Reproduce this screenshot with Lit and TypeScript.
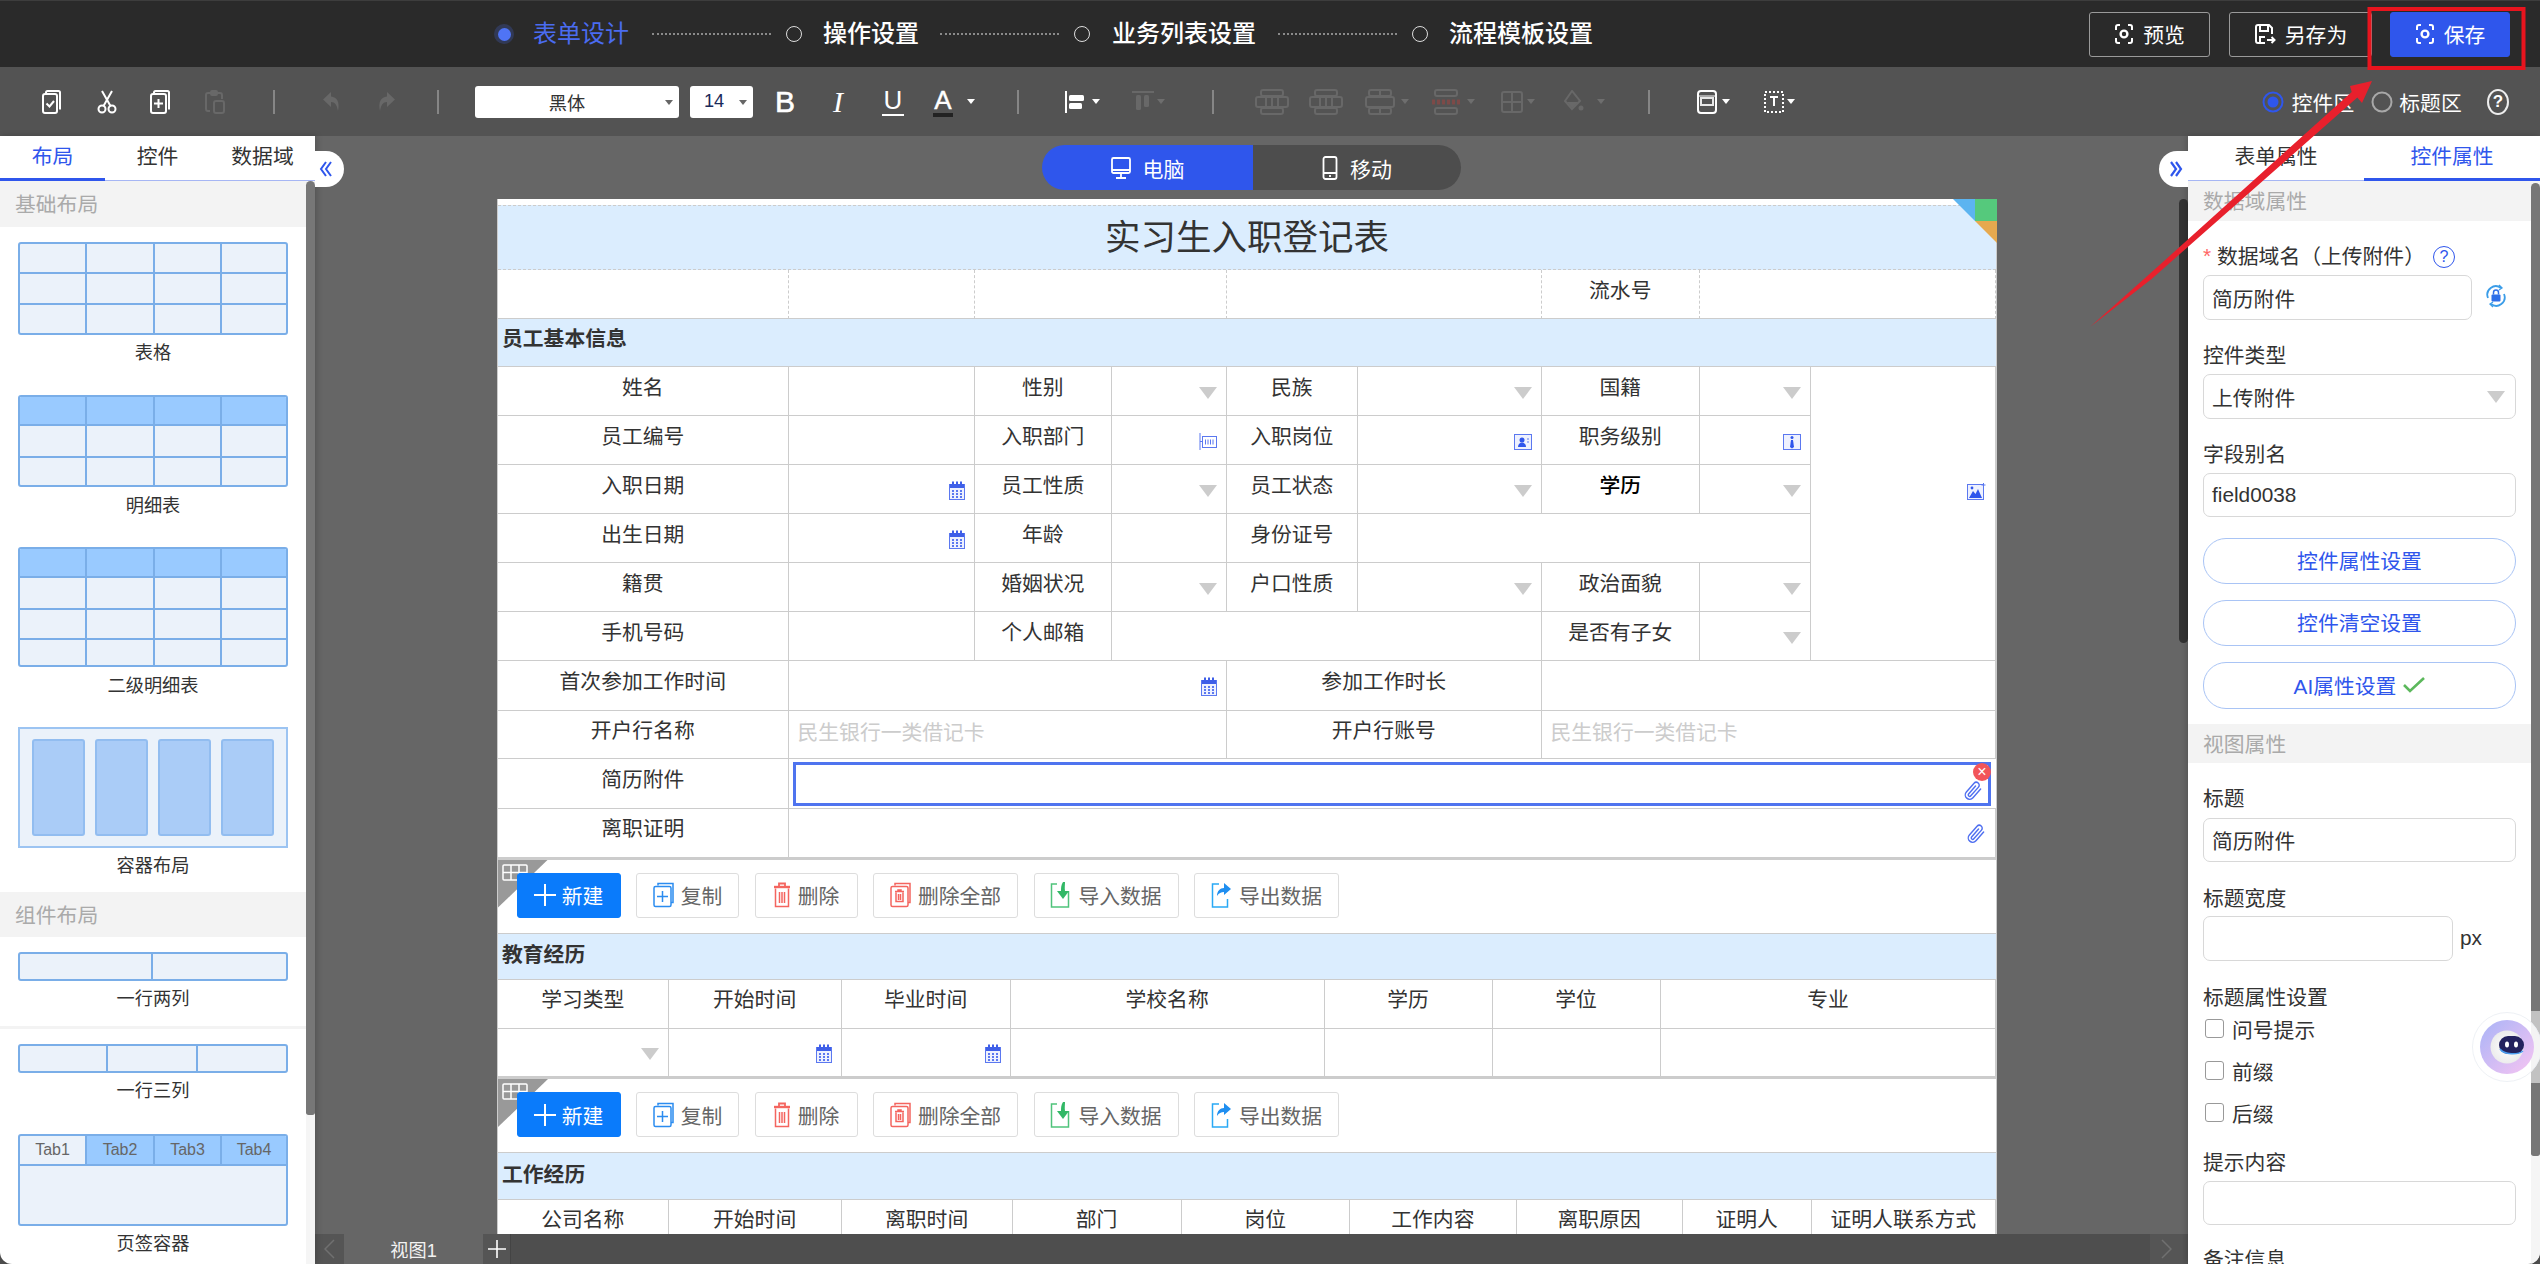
import { LitElement, html, css } from "lit";
import { customElement } from "lit/decorators.js";

const icoScan = html`<svg width="20" height="22" viewBox="0 0 20 22" fill="none" stroke="currentColor" stroke-width="2"><path d="M6 2H4a2 2 0 0 0-2 2v3M14 2h2a2 2 0 0 1 2 2v3M6 20H4a2 2 0 0 1-2-2v-3M14 20h2a2 2 0 0 0 2-2v-3"/><circle cx="10" cy="11" r="3.4" stroke-width="2.4"/></svg>`;
const icoSaveAs = html`<svg width="22" height="22" viewBox="0 0 22 22" fill="none" stroke="currentColor" stroke-width="2"><path d="M11 20H4a2 2 0 0 1-2-2V4a2 2 0 0 1 2-2h11l3 3v6"/><path d="M6 2v6h8V2M6 20v-6h5"/><path d="M13 17h7M17.500 14l3 3-3 3"/></svg>`;
const icoCopyCheck = html`<svg width="26" height="26" viewBox="0 0 26 26" fill="none" stroke="currentColor" stroke-width="2"><path d="M7 5V3.500A1.500 1.500 0 0 1 8.500 2h11A1.500 1.500 0 0 1 21 3.500v17"/><rect x="4" y="5" width="14" height="19" rx="2"/><path d="M7.500 14.500l3 3 4.500-5.500"/></svg>`;
const icoScissors = html`<svg width="24" height="26" viewBox="0 0 24 26" fill="none" stroke="currentColor" stroke-width="2"><circle cx="7" cy="20" r="3.500"/><circle cx="17" cy="20" r="3.500"/><path d="M8.500 17 17 2M15.500 17 7 2"/></svg>`;
const icoCopyPlus = html`<svg width="26" height="26" viewBox="0 0 26 26" fill="none" stroke="currentColor" stroke-width="2"><path d="M7 5V3.500A1.500 1.500 0 0 1 8.500 2h12A1.500 1.500 0 0 1 22 3.500v17"/><rect x="4" y="5" width="15" height="19" rx="2"/><path d="M11.500 10v9M7 14.500h9"/></svg>`;
const icoPaste = html`<svg width="24" height="26" viewBox="0 0 24 26" fill="none" stroke="currentColor" stroke-width="2"><path d="M7 22H5a2 2 0 0 1-2-2V6a2 2 0 0 1 2-2h12a2 2 0 0 1 2 2v4"/><rect x="8" y="2" width="6" height="4" rx="1"/><rect x="11" y="12" width="10" height="12" rx="2"/></svg>`;
const icoUndo = html`<svg width="24" height="26" viewBox="0 0 24 26" fill="currentColor"><path d="M11 3 3 10.500 11 18v-5c4 0 6 3 7 9 2-9-1-14-7-14.500z"/></svg>`;
const icoRedo = html`<svg width="24" height="26" viewBox="0 0 24 26" fill="currentColor"><path d="M13 3l8 7.500L13 18v-5c-4 0-6 3-7 9-2-9 1-14 7-14.500z"/></svg>`;
const icoAlignL = html`<svg width="22" height="24" viewBox="0 0 22 24" fill="currentColor"><rect x="1" y="1" width="2" height="22"/><rect x="5" y="5" width="15" height="6" rx="1.500"/><rect x="5" y="13" width="13" height="6" rx="1.500"/></svg>`;
const icoAlignT = html`<svg width="26" height="24" viewBox="0 0 26 24" fill="currentColor"><rect x="2" y="1" width="22" height="2"/><rect x="6" y="5" width="5" height="15" rx="1.500"/><rect x="14" y="5" width="5" height="12" rx="1.500"/></svg>`;
const icoMerge = html`<svg width="34" height="26" viewBox="0 0 34 26" fill="none" stroke="currentColor" stroke-width="2"><rect x="6" y="1" width="22" height="6" rx="2"/><rect x="1" y="8" width="32" height="10" rx="2"/><rect x="6" y="19" width="22" height="6" rx="2"/><path d="M11 8v10M17 8v10M23 8v10"/></svg>`;
const icoMerge2 = html`<svg width="30" height="26" viewBox="0 0 30 26" fill="none" stroke="currentColor" stroke-width="2"><rect x="4" y="1" width="22" height="6" rx="2"/><rect x="1" y="8" width="28" height="10" rx="2"/><rect x="4" y="19" width="22" height="6" rx="2"/><path d="M15 1v6M15 19v6"/></svg>`;
const icoMergeR = html`<svg width="30" height="26" viewBox="0 0 30 26" fill="none" stroke="currentColor" stroke-width="2"><rect x="4" y="1" width="22" height="6" rx="2"/><rect x="4" y="19" width="22" height="6" rx="2"/><path d="M1 13h28" stroke="#7d4a48" stroke-width="5" stroke-dasharray="3 2"/></svg>`;
const icoGrid = html`<svg width="22" height="24" viewBox="0 0 22 24" fill="none" stroke="currentColor" stroke-width="2"><rect x="1" y="2" width="20" height="20" rx="2"/><path d="M11 2v20M1 12h20"/></svg>`;
const icoFill = html`<svg width="20" height="24" viewBox="0 0 20 24" fill="currentColor"><path d="M8 1 1 11l7 8 8-8z" fill="none" stroke="currentColor" stroke-width="2"/><path d="M3 12h11l-6 6z"/><circle cx="17" cy="18" r="2.500"/></svg>`;
const icoRowBox = html`<svg width="20" height="24" viewBox="0 0 20 24" fill="none"><rect x="1" y="1" width="18" height="22" rx="3" stroke="#fff" stroke-width="2"/><rect x="4" y="8" width="12" height="7" stroke="#e8e8e8" stroke-width="2"/><path d="M1 6h18" stroke="#fff" stroke-width="1"/></svg>`;
const icoTitleBox = html`<svg width="20" height="24" viewBox="0 0 20 24" fill="none"><rect x="1" y="2" width="18" height="20" stroke="#fff" stroke-width="2" stroke-dasharray="2 2"/><path d="M6 7h8M10 7v9" stroke="#fff" stroke-width="2"/></svg>`;
const radioOn = html`<svg width="22" height="22" viewBox="0 0 22 22"><circle cx="11" cy="11" r="9.500" fill="none" stroke="#2f56ec" stroke-width="2"/><circle cx="11" cy="11" r="5.500" fill="#2f56ec"/></svg>`;
const radioOff = html`<svg width="22" height="22" viewBox="0 0 22 22"><circle cx="11" cy="11" r="9.500" fill="none" stroke="#a8a8a8" stroke-width="2"/></svg>`;
const chevL = html`<svg width="14" height="16" viewBox="0 0 14 16" fill="none" stroke="#2f56ec" stroke-width="2"><path d="M7 1 2 8l5 7M12 1 7 8l5 7"/></svg>`;
const chevR = html`<svg width="14" height="16" viewBox="0 0 14 16" fill="none" stroke="#2f56ec" stroke-width="2.200"><path d="M2 1l5 7-5 7M7 1l5 7-5 7"/></svg>`;
const icoMonitor = html`<svg width="20" height="24" viewBox="0 0 20 24" fill="none" stroke="#fff" stroke-width="1.800"><rect x="1" y="2" width="18" height="15" rx="1.500"/><path d="M1 14h18M10 17v4M5 22h10"/></svg>`;
const icoMobile = html`<svg width="16" height="24" viewBox="0 0 16 24" fill="none" stroke="#fff" stroke-width="1.800"><rect x="1.500" y="1" width="13" height="22" rx="2"/><path d="M1.500 17h13M8 19v2"/></svg>`;
const icoCal = html`<svg width="16" height="19" viewBox="0 0 16 19"><rect x="0.500" y="3.500" width="15" height="15" fill="#eef1fe" stroke="#5b78f0"/><rect x="1" y="3" width="14" height="4" fill="#3f5fe8"/><rect x="3" y="0.500" width="2" height="4" fill="#3f5fe8"/><rect x="7" y="0.500" width="2" height="4" fill="#3f5fe8"/><rect x="11" y="0.500" width="2" height="4" fill="#3f5fe8"/><g fill="#5b78f0"><rect x="3" y="9" width="2" height="2"/><rect x="7" y="9" width="2" height="2"/><rect x="11" y="9" width="2" height="2"/><rect x="3" y="12" width="2" height="2"/><rect x="7" y="12" width="2" height="2"/><rect x="11" y="12" width="2" height="2"/><rect x="3" y="15" width="2" height="2"/><rect x="7" y="15" width="2" height="2"/><rect x="11" y="15" width="2" height="2"/></g></svg>`;
const icoSel = html`<span class="sel"></span>`;
const icoDept = html`<svg width="18" height="17" viewBox="0 0 18 17" fill="none" stroke="#5b78f0"><path d="M1 0v17M1 8.500h2"/><rect x="3.500" y="3.500" width="14" height="11" /><path d="M6.500 6.500v5M9 6.500v5M11.500 6.500v5M14 6.500v5" stroke-width="1"/></svg>`;
const icoPost = html`<svg width="18" height="16" viewBox="0 0 18 16"><rect x="0.500" y="0.500" width="17" height="15" fill="#eef1fe" stroke="#5b78f0"/><circle cx="8" cy="6" r="2.500" fill="#2f56ec"/><path d="M4 13c0-3 2-4.500 4-4.500s4 1.500 4 4.500z" fill="#2f56ec"/><path d="M13 5h2M13 8h2" stroke="#5b78f0"/></svg>`;
const icoRank = html`<svg width="18" height="16" viewBox="0 0 18 16"><rect x="0.500" y="0.500" width="17" height="15" fill="#eef1fe" stroke="#5b78f0"/><circle cx="9" cy="3.500" r="1.500" fill="#2f56ec"/><path d="M8 6h2l1 7-2 1.500L7 13z" fill="#2f56ec"/></svg>`;
const icoImg = html`<svg width="19" height="17" viewBox="0 0 19 17"><rect x="0.500" y="1.500" width="16" height="15" fill="#eef1fe" stroke="#5b78f0"/><path d="M2 15l4-7 2.500 3L11 6l4 9z" fill="#2f56ec"/><circle cx="5" cy="5" r="1.400" fill="#2f56ec"/><path d="M16.500 0v4M14.500 2h4" stroke="#5b78f0"/></svg>`;
const icoClip = html`<svg width="19" height="24" viewBox="0 0 24 24" fill="none" stroke="#4f6ff0" stroke-width="1.800" stroke-linecap="round"><path d="m21 9.500-9.700 11a5.500 5.500 0 0 1-8.300-7.300l9.700-11a3.700 3.700 0 0 1 5.600 4.900l-9.700 11a1.800 1.800 0 0 1-2.800-2.400l8.800-10"/></svg>`;
const icoPlus = html`<svg width="22" height="22" viewBox="0 0 22 22" stroke="#fff" stroke-width="2"><path d="M11 0v22M0 11h22"/></svg>`;
const icoCopy = html`<svg width="21" height="26" viewBox="0 0 21 26" fill="none" stroke="#2b8cf0" stroke-width="1.500"><path d="M5 3.500V1.500h15v19h-2"/><rect x="1" y="4.500" width="17" height="20" rx="1.500" fill="#fff"/><path d="M9.500 9v11M4 14.500h11"/></svg>`;
const icoTrash = html`<svg width="18" height="26" viewBox="0 0 18 26" fill="none" stroke="#f4655f" stroke-width="1.800"><path d="M1 5h16" stroke-width="2.400"/><path d="M6 5V1.500h6V5"/><path d="M2.500 6.500v18h13v-18M6.500 10v11M9 10v11M11.500 10v11" stroke-width="1.500"/></svg>`;
const icoTrashAll = html`<svg width="21" height="26" viewBox="0 0 21 26" fill="none" stroke="#f4655f" stroke-width="1.500"><path d="M5 3.500V1.500h15v19h-2"/><rect x="1" y="4.500" width="17" height="20" rx="1.500" fill="#fff"/><path d="M5 9.500h9M8 9.500V8h3v1.500M6 10.500v9h7v-9M8.500 12v6M10.500 12v6"/></svg>`;
const icoImport = html`<svg width="21" height="28" viewBox="0 0 21 28" fill="none"><path d="M7 3H1.500v23h17V10" stroke="#4fc37b" stroke-width="1.500"/><path d="M13 1c-2 3-2 6-2 9H7l6 8 6-8h-4c-.5-3 0-6 0-9z" fill="#32b866"/></svg>`;
const icoExport = html`<svg width="21" height="28" viewBox="0 0 21 28" fill="none"><path d="M8 3H1.500v23h15v-8" stroke="#29a9f5" stroke-width="1.500"/><path d="M13 2l7 6-7 6v-3c-3 0-5 1-7 4 0-5 3-8 7-8z" fill="#1f8ef0"/></svg>`;
const icoLock = html`<svg width="22" height="24" viewBox="0 0 22 24" fill="none"><path d="M3 14A8.500 8.500 0 0 1 16 4M19 10a8.500 8.500 0 0 1-13 10" stroke="#3b9de8" stroke-width="1.800"/><path d="M14 1l3 3-3 2M8 23l-3-3 3-2" stroke="#3b9de8" stroke-width="1.300"/><rect x="6.500" y="10.500" width="9" height="7" rx="1" fill="#2f6fe8"/><path d="M8.500 10.500V8.500a2.500 2.500 0 0 1 5 0v2" stroke="#2f6fe8" stroke-width="1.500"/></svg>`;
const icoCheck = html`<svg width="22" height="16" viewBox="0 0 22 16" fill="none" stroke="#5cb85c" stroke-width="2.600"><path d="M1 8l6 6L21 1"/></svg>`;
const icoTableMini = html`<svg width="26" height="17" viewBox="0 0 26 17" fill="none" stroke="#fff" stroke-width="1.500"><rect x="1" y="1" width="24" height="15" rx="1"/><path d="M9 1v15M17 1v15M1 8.500h24"/></svg>`;
const icoChevBL = html`<svg width="11" height="20" viewBox="0 0 11 20" fill="none" stroke="#707070" stroke-width="1.500"><path d="M10 1 1 10l9 9"/></svg>`;
const icoChevBR = html`<svg width="11" height="20" viewBox="0 0 11 20" fill="none" stroke="#707070" stroke-width="1.500"><path d="M1 1l9 9-9 9"/></svg>`;

type Cell = { k: "l" | "v" | "ph" | "title" | "dash" | "dashl" | "sec" | "selbox" | "strong"; t?: string; i?: any; s?: number; r?: number; top?: boolean };

const COLS = [290.5, 186.5, 136.5, 115.5, 130.5, 184, 158.5, 110.5, 185.5];
const ROWS = [65, 49, 48, 49, 49, 49, 49, 49, 49, 49.5, 48.5, 49.5, 49];
const L = (t: string, s = 1): Cell => ({ k: "l", t, s });
const V = (i?: any, s = 1): Cell => ({ k: "v", i, s });
const CELLS: Cell[] = [
  { k: "title", t: "实习生入职登记表", s: 9 },
  { k: "dash" }, { k: "dash" }, { k: "dash", s: 2 }, { k: "dash", s: 2 }, { k: "dashl", t: "流水号" }, { k: "dash", s: 2 },
  { k: "sec", t: "员工基本信息", s: 9 },
  L("姓名"), V(), L("性别"), V(icoSel), L("民族"), V(icoSel), L("国籍"), V(icoSel), { k: "v", i: icoImg, r: 6, top: true },
  L("员工编号"), V(), L("入职部门"), V(icoDept), L("入职岗位"), V(icoPost), L("职务级别"), V(icoRank),
  L("入职日期"), V(icoCal), L("员工性质"), V(icoSel), L("员工状态"), V(icoSel), { k: "strong", t: "学历" }, V(icoSel),
  L("出生日期"), V(icoCal), L("年龄"), V(), L("身份证号"), V(undefined, 3),
  L("籍贯"), V(), L("婚姻状况"), V(icoSel), L("户口性质"), V(icoSel), L("政治面貌"), V(icoSel),
  L("手机号码"), V(), L("个人邮箱"), V(undefined, 3), L("是否有子女"), V(icoSel),
  L("首次参加工作时间"), V(icoCal, 3), L("参加工作时长", 2), V(undefined, 3),
  L("开户行名称"), { k: "ph", t: "民生银行一类借记卡", s: 3 }, L("开户行账号", 2), { k: "ph", t: "民生银行一类借记卡", s: 3 },
  L("简历附件"), { k: "selbox", s: 8 },
  L("离职证明"), V(icoClip, 8),
];

const EDU_COLS = [170.6, 173, 169, 314, 168, 168, 335.7];
const WORK_COLS = [170.6, 173, 171, 169, 168.5, 166.5, 166, 129, 184.4];

@customElement("app-root")
export class AppRoot extends LitElement {
  static styles = css`
    :host { display: block; width: 2540px; height: 1264px; overflow: hidden; position: relative;
      font-family: "Liberation Sans", "Noto Sans CJK SC", sans-serif; color: #333; background: #4e4e4e; }
    * { box-sizing: border-box; }
    .top { height: 67px; background: #2a2a2a; border-top: 1px solid #3d3d3d; display: flex; align-items: center; padding: 0 30px 0 494px; }
    .stepdot { width: 20px; height: 20px; border-radius: 50%; background: rgba(79,116,245,.22); display: flex; align-items: center; justify-content: center; }
    .stepdot i { display: block; width: 13px; height: 13px; border-radius: 50%; background: #4f74f5; }
    .steptxt { font-size: 24px; color: #fff; font-weight: 500; line-height: 32px; white-space: nowrap; margin-left: 21px; }
    .steptxt.on { color: #4a6cf0; font-weight: 400; margin-left: 19px; }
    .dots { width: 119px; border-top: 2px dotted #8a8a8a; margin-left: 21px; margin-right: 15px; }
    .ring { width: 16px; height: 16px; border-radius: 50%; border: 1.500px solid #ddd; }
    .topbtns { margin-left: auto; display: flex; gap: 19px; }
    .topbtn { height: 45px; border: 1px solid #9a9a9a; border-radius: 3px; color: #fff; font-size: 20.800px; display: flex; align-items: center; justify-content: center; gap: 9px; }
    .topbtn.a { width: 121px; } .topbtn.b { width: 143px; margin-right: -1px; }
    .topbtn.save { width: 120px; background: #2f56ec; border-color: #2f56ec; }
    .tools { height: 69px; background: #535353; display: flex; align-items: center; color: #fff; }
    .tb { flex: none; display: flex; align-items: center; justify-content: center; }
    .tb.dis { color: #686868; }
    .sep { width: 2px; height: 24px; background: #868686; }
    .ca { width: 0; height: 0; border-left: 4px solid transparent; border-right: 4px solid transparent; border-top: 5px solid #fff; }
    .dis .ca { border-top-color: #6e6e6e; }
    .fsel { height: 32px; background: #fff; border-radius: 3px; color: #333; font-size: 18.200px; display: flex; align-items: center; position: relative; justify-content: center; }
    .fsel .ca { position: absolute; right: 6px; top: 14px; border-top-color: #666; }
    .fsel.f14 { justify-content: flex-start; padding-left: 14px; color: #1a2a5a; }
    .fmt { font-size: 30px; line-height: 30px; }
    .fmt.b { -webkit-text-stroke: 0.600px #fff; }
    .fmt.i { font-family: "Liberation Serif", serif; font-style: italic; font-size: 30px; }
    .fmt.u { border-bottom: 2px solid #fff; line-height: 26px; height: 29px; font-size: 26px; padding: 0 2px; }
    .fmt.a { font-size: 26px; border-bottom: 4px solid #222; line-height: 26px; height: 30px; padding: 0 1px; -webkit-text-stroke: 0.400px #fff; }
    .rtxt { font-size: 20.800px; white-space: nowrap; color: #fff; }
    .qmark { width: 22px; height: 26px; border-radius: 50%; border: 2px solid #eee; font-size: 17px; font-weight: 700; display: flex; align-items: center; justify-content: center; color: #fff; }
    .body { display: flex; height: 1128px; }
    .left { width: 315px; flex: none; background: #fff; display: flex; flex-direction: column; border-bottom-left-radius: 12px; overflow: hidden; box-shadow: 2px 0 6px rgba(0,0,0,.18); position: relative; z-index: 2; }
    .right { width: 352px; flex: none; background: #fff; display: flex; flex-direction: column; border-bottom-right-radius: 12px; overflow: hidden; box-shadow: -2px 0 6px rgba(0,0,0,.18); position: relative; z-index: 2; }
    .tabs { height: 45px; flex: none; display: flex; border-bottom: 1px solid #a6b6f4; background: #fff; }
    .tab { flex: 1; display: flex; align-items: center; justify-content: center; font-size: 20.800px; padding-bottom: 4px; color: #333; border-bottom: 3px solid transparent; margin-bottom: -1px; }
    .tab.on { color: #2f56ec; border-bottom-color: #2f56ec; }
    .pbody { flex: 1; min-height: 0; display: flex; }
    .pcontent { flex: 1; min-width: 0; overflow: hidden; }
    .track { width: 9px; flex: none; background: #f5f5f5; }
    .track i { display: block; background: #777; border-radius: 5px 5px 3px 3px; }
    .track .lt { height: 934px; }
    .track .rt { height: 973px; margin-top: 2px; }
    .psec { background: #f3f3f3; color: #aaa; font-size: 20.800px; display: flex; align-items: center; padding-left: 15px; }
    .psec.h46 { height: 46px; padding-bottom: 2px; } .psec.h45 { height: 45px; padding-bottom: 2px; }
    .psec.h40 { height: 40px; padding-bottom: 2px; } .psec.h39 { height: 39px; margin-top: 15.500px; padding-bottom: 2px; }
    .item { padding: 15px 0 0 18px; width: 306px; }
    .item.p1 { height: 152.500px; } .item.p3 { height: 180px; } .item.p5 { height: 89px; }
    .item.p6 { height: 92.500px; border-top: 3px solid #f3f3f3; padding-top: 15px; }
    .ilabel { width: 270px; text-align: center; font-size: 18.200px; line-height: 24px; margin-top: 6.500px; color: #333; }
    .thumb { width: 270px; border: 2px solid #7aaee8; border-radius: 3px; background: #ebf2fa; display: grid; overflow: hidden; }
    .tc { border-right: 2px solid #7aaee8; border-bottom: 2px solid #7aaee8; }
    .tc.lastc { border-right: 0; } .tc.lastr { border-bottom: 0; }
    .tc.head { background: #99caff; }
    .tc.tabc { font-size: 16px; color: #666; display: flex; align-items: center; justify-content: center; }
    .tc.all { grid-column: 1 / -1; border: 0; }
    .cont { width: 270px; height: 120.500px; border: 2px solid #9cc4f2; background: #ebf2fa; display: flex; gap: 10px; padding: 10px 12px; }
    .cont i { display: block; width: 53px; background: #aaccf7; border: 2px solid #92bdf0; border-radius: 3px; }
    .center { flex: 1; min-width: 0; display: flex; flex-direction: column; }
    .canvas { flex: 1; min-height: 0; background: #666; position: relative; overflow: hidden; padding-top: 9px; }
    .toggle { position: absolute; top: 15px; width: 29px; height: 36px; background: #fff; display: flex; align-items: center; justify-content: center; z-index: 3; }
    .toggle.l { left: 0; border-radius: 0 18px 18px 0; padding-right: 7px; }
    .toggle.r { right: 0; border-radius: 18px 0 0 18px; padding-left: 4px; }
    .cbar { position: absolute; top: 63px; right: 0; width: 9px; height: 444px; border-radius: 5px; background: #333; z-index: 2; }
    .device { display: flex; justify-content: center; height: 45px; margin-bottom: 9px; }
    .dv { display: flex; align-items: center; justify-content: center; gap: 12px; color: #fff; font-size: 21px; height: 45px; }
    .dv.on { width: 211px; background: #2f56ec; border-radius: 23px 0 0 23px; margin-right: 0; }
    .dv.off { width: 208px; background: #4d4d4d; border-radius: 0 23px 23px 0; }
    .form { width: 1500px; margin-left: 182px; background: #fff; padding-top: 6px; border-left: 1px solid #ccc; border-right: 1px solid #ccc; position: relative; }
    .corner { position: absolute; right: -1px; top: 0; }
    .grid { display: grid; }
    .c { border-right: 1px solid #ccc; border-bottom: 1px solid #ccc; font-size: 20.800px; color: #333; min-width: 0; display: flex; align-items: center; line-height: 1; }
    .c.l, .c.strong, .c.dashl { justify-content: center; padding-bottom: 6px; }
    .c.strong { color: #000; font-weight: 500; }
    .c.v { justify-content: flex-end; padding: 3px 9px 0 0; }
    .c.v.imgc { align-items: flex-start; padding-top: 116px; }
    .c.ph { color: #ccc; padding: 0 0 2px 9px; }
    .c.title { background: #dbedfe; border: 0; border-top: 1px dashed #ccc; border-bottom: 1px dashed #ccc; justify-content: center; font-size: 35.500px; padding-top: 2px; }
    .c.dash, .c.dashl { border-right: 1px dashed #ccc; border-bottom: 1px solid #ccc; }
    .c.sec, .sect { background: #dbedfe; border-right: 0; border-bottom: 1px solid #ccc; font-weight: 700; font-size: 20.800px; padding: 0 0 6px 4px; display: flex; align-items: center; color: #333; }
    .sect { height: 47.500px; border-top: 1px solid #ccc; }
    .c.selbox { padding: 3px 5px 2px 4px; border-right: 0; position: relative; }
    .selin { flex: 1; height: 100%; border: 3px solid #4f74ef; display: flex; align-items: flex-end; justify-content: flex-end; padding: 0 5px 0 0; }
    .close { position: absolute; right: 5px; top: 4px; width: 18px; height: 18px; border-radius: 50%; background: #f2555a; color: #fff; font-size: 16px; display: flex; align-items: center; justify-content: center; line-height: 1; z-index: 1; }
    .sel { display: block; width: 0; height: 0; border-left: 9px solid transparent; border-right: 9px solid transparent; border-top: 12px solid #ccc; }
    .bar { height: 75px; border-top: 2.500px solid #ccc; padding: 13px 0 0 18.500px; display: flex; gap: 15.500px; position: relative; align-items: flex-start; }
    .tri { position: absolute; left: 0; top: 0; width: 50px; height: 48px; background: #999; clip-path: polygon(0 0, 100% 0, 0 100%); }
    .triico { position: absolute; left: 4px; top: 4px; }
    .btn { position: relative; height: 45px; border: 1px solid #ddd; border-radius: 3px; background: #fff; font-size: 20.800px; color: #666; display: flex; align-items: center; justify-content: center; gap: 7px; }
    .btn.n { width: 104px; background: #0a7bfb; border-color: #0a7bfb; color: #fff; gap: 6px; }
    .btn.w1 { width: 103px; } .btn.w2 { width: 145px; }
    .bottom { height: 30px; flex: none; background: #4e4e4e; display: flex; align-items: center; }
    .bprev { width: 29px; height: 30px; background: #555; display: flex; align-items: center; justify-content: center; }
    .bview { width: 139px; height: 30px; background: #666; color: #f2f2f2; font-size: 18.200px; display: flex; align-items: center; justify-content: center; }
    .bplus { width: 28px; height: 30px; background: #555; display: flex; align-items: center; justify-content: center; border-right: 1px solid #444; }
    .bnext { margin-left: auto; width: 38px; height: 30px; background: #555; display: flex; align-items: center; justify-content: center; padding-right: 5px; }
    .pf { padding-left: 15px; }
    .lb { font-size: 20.800px; height: 28px; line-height: 25px; padding-top: 3px; margin: 20px 0 6px; color: #333; display: flex; align-items: center; white-space: nowrap; }
    .star { color: #f66; width: 14px; position: relative; top: -1px; }
    .qm { width: 22px; height: 22px; margin-left: 8px; border: 1.500px solid #2f56ec; border-radius: 50%; color: #2f56ec; font-size: 16px; display: flex; align-items: center; justify-content: center; }
    .inrow { display: flex; align-items: center; }
    .inp { width: 313px; height: 45px; border: 1px solid #d8d8d8; border-radius: 7px; padding-left: 8px; font-size: 20.800px; color: #333; display: flex; align-items: center; justify-content: space-between; background: #fff; padding-right: 10px; }
    .inp.s { width: 269px; } .inp.t { width: 250px; }
    .inp.h44 { height: 44px; } .inp.h445 { height: 44.500px; }
    .lockico { margin-left: 13px; }
    .unit { margin-left: 7px; font-size: 20.800px; color: #333; }
    .pill { width: 313px; height: 46px; border: 1px solid #a9c4f5; border-radius: 23px; color: #2f56ec; font-size: 20.800px; display: flex; align-items: center; justify-content: center; gap: 7px; margin-top: 16px; padding-bottom: 2px; }
    .pill.first { margin-top: 20.500px; } .pill.tall { height: 47px; padding-bottom: 0; }
    .chk { height: 42px; display: flex; align-items: center; padding-left: 2px; gap: 8px; font-size: 20.800px; color: #333; }
    .chk i { display: block; width: 19px; height: 19px; border: 1.500px solid #999; border-radius: 3px; }
    .m1 { margin-bottom: 6.500px; } .m2 { margin-top: 21.500px; margin-bottom: 5px; } .m3 { margin-top: 21.500px; margin-bottom: -2.500px; }
    .m4 { margin-top: 13.500px; margin-bottom: 5.500px; } .m5 { margin-top: 19px; }
    .overlay { position: absolute; left: 0; top: 0; pointer-events: none; z-index: 10; }
    .robot { position: absolute; left: 2472px; top: 1011px; z-index: 5; }
  `;

  private thumb(cols: number[], rows: number[], head = false) {
    const st = `grid-template-columns:${cols.map((c) => c + "px").join(" ")};grid-template-rows:${rows.map((r) => r + "px").join(" ")}`;
    return html`<div class="thumb" style=${st}>
      ${rows.flatMap((_, r) => cols.map((_, c) => html`<div class="tc ${c === cols.length - 1 ? "lastc" : ""} ${r === rows.length - 1 ? "lastr" : ""} ${head && r === 0 ? "head" : ""}"></div>`))}
    </div>`;
  }

  private tabThumb(cols: number[]) {
    const st = `grid-template-columns:${cols.map((c) => c + "px").join(" ")};grid-template-rows:30px 58px`;
    return html`<div class="thumb" style=${st}>
      ${["Tab1", "Tab2", "Tab3", "Tab4"].map((t, i) => html`<div class="tc tabc ${i ? "head" : ""} ${i === 3 ? "lastc" : ""}">${t}</div>`)}
      <div class="tc all"></div>
    </div>`;
  }

  private grid(cols: number[], rows: number[], cells: Cell[]) {
    const st = `grid-template-columns:${cols.map((c) => c + "px").join(" ")};grid-template-rows:${rows.map((r) => r + "px").join(" ")}`;
    return html`<div class="grid" style=${st}>${cells.map((c) => {
      const sp = `grid-column:span ${c.s ?? 1};grid-row:span ${c.r ?? 1}`;
      if (c.k === "selbox") {
        return html`<div class="c selbox" style=${sp}><div class="selin">${icoClip}</div><span class="close">×</span></div>`;
      }
      return html`<div class="c ${c.k} ${c.top ? "imgc" : ""}" style=${sp}>${c.t ?? ""}${c.i ?? ""}</div>`;
    })}</div>`;
  }

  private bar() {
    return html`<div class="bar">
      <div class="tri"></div><div class="triico">${icoTableMini}</div>
      <div class="btn n">${icoPlus}<span>新建</span></div>
      <div class="btn w1">${icoCopy}<span>复制</span></div>
      <div class="btn w1">${icoTrash}<span>删除</span></div>
      <div class="btn w2">${icoTrashAll}<span>删除全部</span></div>
      <div class="btn w2">${icoImport}<span>导入数据</span></div>
      <div class="btn w2">${icoExport}<span>导出数据</span></div>
    </div>`;
  }

  private toolbar() {
    const ca = html`<div class="ca"></div>`;
    const items: { x: number; w: number; t: any; d?: boolean }[] = [
      { x: 52, w: 26, t: icoCopyCheck }, { x: 107, w: 24, t: icoScissors }, { x: 160, w: 26, t: icoCopyPlus }, { x: 215, w: 24, t: icoPaste, d: true },
      { x: 274, w: 2, t: html`<div class="sep"></div>` }, { x: 332, w: 24, t: icoUndo, d: true }, { x: 386, w: 24, t: icoRedo, d: true }, { x: 438, w: 2, t: html`<div class="sep"></div>` },
      { x: 577, w: 204, t: html`<div class="fsel" style="width:204px;padding-right:20px">黑体<div class="ca"></div></div>` },
      { x: 721.5, w: 63, t: html`<div class="fsel f14" style="width:63px">14<div class="ca"></div></div>` },
      { x: 785, w: 22, t: html`<span class="fmt b">B</span>` }, { x: 838, w: 14, t: html`<span class="fmt i">I</span>` },
      { x: 893, w: 22, t: html`<span class="fmt u">U</span>` }, { x: 943, w: 22, t: html`<span class="fmt a">A</span>` }, { x: 971, w: 8, t: ca },
      { x: 1018, w: 2, t: html`<div class="sep"></div>` }, { x: 1075, w: 22, t: icoAlignL }, { x: 1096, w: 8, t: ca },
      { x: 1143, w: 26, t: icoAlignT, d: true }, { x: 1161, w: 8, t: ca, d: true }, { x: 1213, w: 2, t: html`<div class="sep"></div>` },
      { x: 1272, w: 34, t: icoMerge, d: true }, { x: 1326, w: 34, t: icoMerge, d: true }, { x: 1380, w: 30, t: icoMerge2, d: true }, { x: 1405, w: 8, t: ca, d: true },
      { x: 1446, w: 30, t: icoMergeR, d: true }, { x: 1471, w: 8, t: ca, d: true }, { x: 1512, w: 22, t: icoGrid, d: true }, { x: 1531, w: 8, t: ca, d: true },
      { x: 1574, w: 20, t: icoFill, d: true }, { x: 1601, w: 8, t: ca, d: true }, { x: 1649, w: 2, t: html`<div class="sep"></div>` },
      { x: 1706.5, w: 20, t: icoRowBox }, { x: 1726, w: 8, t: ca }, { x: 1773.5, w: 20, t: icoTitleBox }, { x: 1791, w: 8, t: ca },
      { x: 2273, w: 22, t: radioOn }, { x: 2323, w: 62, t: html`<span class="rtxt">控件区</span>` },
      { x: 2382, w: 22, t: radioOff }, { x: 2430.5, w: 62, t: html`<span class="rtxt">标题区</span>` },
      { x: 2498, w: 22, t: html`<span class="qmark">?</span>` },
    ];
    let last = 0;
    return items.map((it) => {
      const ml = it.x - it.w / 2 - last;
      last = it.x + it.w / 2;
      return html`<div class="tb ${it.d ? "dis" : ""}" style=${`width:${it.w}px;margin-left:${ml}px`}>${it.t}</div>`;
    });
  }

  render() {
    const eduLine: Cell[] = ["学习类型", "开始时间", "毕业时间", "学校名称", "学历", "学位", "专业"].map((t) => L(t));
    const edu2: Cell[] = [V(icoSel), V(icoCal), V(icoCal), V(), V(), V(), V()];
    const work: Cell[] = ["公司名称", "开始时间", "离职时间", "部门", "岗位", "工作内容", "离职原因", "证明人", "证明人联系方式"].map((t) => L(t));
    const T4 = [67, 68, 67, 64];
    return html`
      <div class="top">
        <div class="stepdot"><i></i></div><div class="steptxt on">表单设计</div>
        <div class="dots" style="margin-left:23px"></div><div class="ring"></div><div class="steptxt">操作设置</div>
        <div class="dots"></div><div class="ring"></div><div class="steptxt" style="margin-left:22px">业务列表设置</div>
        <div class="dots" style="margin-left:22px"></div><div class="ring"></div><div class="steptxt">流程模板设置</div>
        <div class="topbtns">
          <div class="topbtn a">${icoScan}<span>预览</span></div>
          <div class="topbtn b">${icoSaveAs}<span>另存为</span></div>
          <div class="topbtn save">${icoScan}<span>保存</span></div>
        </div>
      </div>
      <div class="tools">${this.toolbar()}</div>
      <div class="body">
        <div class="left">
          <div class="tabs"><div class="tab on">布局</div><div class="tab">控件</div><div class="tab">数据域</div></div>
          <div class="pbody">
            <div class="pcontent">
              <div class="psec h46">基础布局</div>
              <div class="item p1">${this.thumb(T4, [29.5, 31.5, 27.5])}<div class="ilabel">表格</div></div>
              <div class="item p1">${this.thumb(T4, [29.5, 31.5, 27.5], true)}<div class="ilabel">明细表</div></div>
              <div class="item p3">${this.thumb(T4, [29, 32, 30, 25], true)}<div class="ilabel">二级明细表</div></div>
              <div class="item p3"><div class="cont"><i></i><i></i><i></i><i></i></div><div class="ilabel">容器布局</div></div>
              <div class="psec h45">组件布局</div>
              <div class="item p5">${this.thumb([133, 133], [24.5])}<div class="ilabel">一行两列</div></div>
              <div class="item p6">${this.thumb([88, 90, 88], [24.5])}<div class="ilabel">一行三列</div></div>
              <div class="item">${this.tabThumb(T4)}<div class="ilabel">页签容器</div></div>
            </div>
            <div class="track"><i class="lt"></i></div>
          </div>
        </div>
        <div class="center">
          <div class="canvas">
            <div class="toggle l">${chevL}</div>
            <div class="toggle r">${chevR}</div>
            <div class="cbar"></div>
            <div class="device">
              <div class="dv on">${icoMonitor}<span>电脑</span></div>
              <div class="dv off">${icoMobile}<span>移动</span></div>
            </div>
            <div class="form">
              <svg class="corner" width="44" height="44" viewBox="0 0 44 44"><polygon points="0,0 22,0 22,22" fill="#5cb4f0"/><polygon points="22,0 44,0 44,22 22,22" fill="#55c97c"/><polygon points="22,22 44,22 44,44" fill="#e6a94f"/></svg>
              ${this.grid(COLS, ROWS, CELLS)}
              ${this.bar()}
              <div class="sect">教育经历</div>
              ${this.grid(EDU_COLS, [48.5, 48.5], [...eduLine, ...edu2])}
              ${this.bar()}
              <div class="sect">工作经历</div>
              ${this.grid(WORK_COLS, [49], work)}
            </div>
          </div>
          <div class="bottom">
            <div class="bprev">${icoChevBL}</div>
            <div class="bview">视图1</div>
            <div class="bplus"><svg width="18" height="18" viewBox="0 0 18 18" stroke="#fff" stroke-width="1.600"><path d="M9 0v18M0 9h18"/></svg></div>
            <div class="bnext">${icoChevBR}</div>
          </div>
        </div>
        <div class="right">
          <div class="tabs"><div class="tab">表单属性</div><div class="tab on">控件属性</div></div>
          <div class="pbody">
            <div class="pcontent">
              <div class="psec h40">数据域属性</div>
              <div class="pf">
                <div class="lb"><span class="star">*</span>数据域名（上传附件）<span class="qm">?</span></div>
                <div class="inrow"><div class="inp s">简历附件</div><span class="lockico">${icoLock}</span></div>
                <div class="lb">控件类型</div>
                <div class="inp">上传附件<span class="sel"></span></div>
                <div class="lb">字段别名</div>
                <div class="inp h44">field0038</div>
                <div class="pill first">控件属性设置</div>
                <div class="pill">控件清空设置</div>
                <div class="pill tall"><span>AI属性设置</span>${icoCheck}</div>
              </div>
              <div class="psec h39">视图属性</div>
              <div class="pf">
                <div class="lb m1">标题</div>
                <div class="inp h44">简历附件</div>
                <div class="lb m2">标题宽度</div>
                <div class="inrow"><div class="inp t h445"></div><span class="unit">px</span></div>
                <div class="lb m3">标题属性设置</div>
                <div class="chk"><i></i>问号提示</div>
                <div class="chk"><i></i>前缀</div>
                <div class="chk"><i></i>后缀</div>
                <div class="lb m4">提示内容</div>
                <div class="inp h445"></div>
                <div class="lb m5">备注信息</div>
              </div>
            </div>
            <div class="track"><i class="rt"></i></div>
          </div>
        </div>
      </div>
      <svg class="robot" width="68" height="72" viewBox="0 0 68 72">
        <defs>
          <linearGradient id="rg" x1="0" y1="0" x2="1" y2="1"><stop offset="0" stop-color="#a9b4f7"/><stop offset="1" stop-color="#f7c4f2"/></linearGradient>
          <radialGradient id="rw" cx=".5" cy=".5" r=".5"><stop offset="0" stop-color="#fff"/><stop offset="1" stop-color="#ececec"/></radialGradient>
        </defs>
        <rect x="59" y="0" width="9" height="72" fill="#c2c2c2"/>
        <circle cx="35" cy="36" r="34.500" fill="#fff" fill-opacity=".82" stroke="#eef1f5"/>
        <circle cx="35" cy="36" r="27" fill="url(#rg)"/>
        <circle cx="35" cy="36" r="16.500" fill="url(#rw)"/>
        <rect x="27" y="25" width="25" height="18" rx="9" fill="#23225e"/>
        <path d="M28 38c4 6 18 6 23 2" stroke="#4a9df0" stroke-width="1.500" fill="none"/>
        <ellipse cx="35" cy="33.500" rx="2" ry="3" fill="#fff"/><ellipse cx="44" cy="33.500" rx="2" ry="3" fill="#fff"/>
      </svg>
      <svg class="overlay" width="2540" height="1264" viewBox="0 0 2540 1264">
        <rect x="2369.500" y="9" width="154" height="59" fill="none" stroke="#e8141e" stroke-width="4"/>
        <polygon points="2090,327 2148.400,275.100 2351.700,91.900 2350,86 2372,81 2362,103 2357.300,97.600 2151.600,278.900" fill="#e8202c"/>
      </svg>
    `;
  }
}
